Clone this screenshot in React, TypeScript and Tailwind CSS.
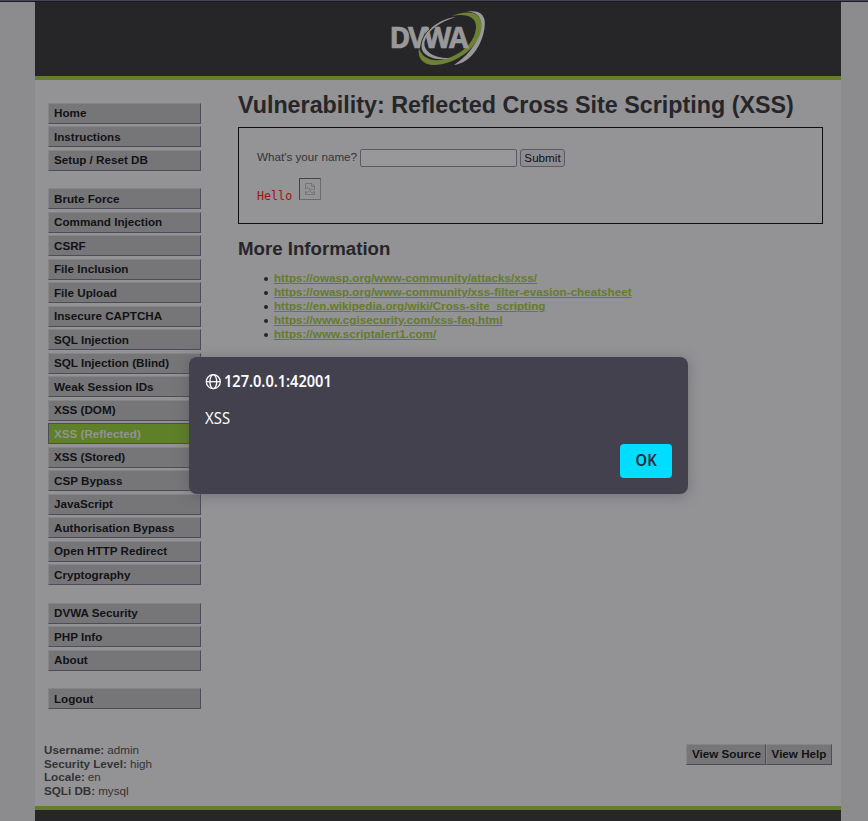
import React from "react";

const groups: string[][] = [
  ["Home", "Instructions", "Setup / Reset DB"],
  [
    "Brute Force",
    "Command Injection",
    "CSRF",
    "File Inclusion",
    "File Upload",
    "Insecure CAPTCHA",
    "SQL Injection",
    "SQL Injection (Blind)",
    "Weak Session IDs",
    "XSS (DOM)",
    "XSS (Reflected)",
    "XSS (Stored)",
    "CSP Bypass",
    "JavaScript",
    "Authorisation Bypass",
    "Open HTTP Redirect",
    "Cryptography",
  ],
  ["DVWA Security", "PHP Info", "About"],
  ["Logout"],
];

const links = [
  "https://owasp.org/www-community/attacks/xss/",
  "https://owasp.org/www-community/xss-filter-evasion-cheatsheet",
  "https://en.wikipedia.org/wiki/Cross-site_scripting",
  "https://www.cgisecurity.com/xss-faq.html",
  "https://www.scriptalert1.com/",
];

const status = [
  ["Username:", "admin"],
  ["Security Level:", "high"],
  ["Locale:", "en"],
  ["SQLi DB:", "mysql"],
];

function Logo() {
  return (
    <svg width="104" height="60" viewBox="0 0 104 60" className="mt-2">
      <path d="M81 3.5C92 2 101 5 98.500 20C96 38 84 55 68 57C80 49 91 37 94 23C97 10 92 4 81 3.500Z" fill="#99999b" />
      <path d="M66 8C80 2 97 3 95.500 19C94 40 68 57 48 57C37 57 31 50 33 40C36 51 49 56 65 49C80 43 89 32 90 20C91 9 80 5 66 8Z" fill="#6c8232" />
      <path d="M70 9C54 14 41 22 38.500 34C37 43 48 51 65 50C50 54 37 48 35.500 40C33 27 51 11 70 9Z" fill="#99999b" />
      <text
        x="0"
        y="0"
        transform="translate(3.6 40) scale(0.99 1)"
        fill="#99999b"
        stroke="#99999b"
        strokeWidth="0.7"
        className="font-['Open_Sans',sans-serif] text-[28.5px] font-bold tracking-[-2.4px]"
      >
        DVWA
      </text>
      <path d="M45 20C38 26 34.500 33 35 41" fill="none" stroke="#262629" strokeWidth="0.9" />
    </svg>
  );
}

function Menu() {
  return (
    <nav className="ml-[13px] mt-[22.9px] flex w-[153px] flex-col gap-[15px]">
      {groups.map((group) => (
        <ul key={group[0]}>
          {group.map((item) => (
            <li
              key={item}
              className={
                item === "XSS (Reflected)"
                  ? "mb-[2.5px] h-[21px] border border-[#4c4c5e] bg-[#5f7f28] pl-[5px] pt-[0.2px] font-bold leading-[18px] text-[#939295]"
                  : "mb-[2.5px] h-[21px] border border-b-[#4c4c5e] border-l-[#858588] border-r-[#4c4c5e] border-t-[#858588] bg-[#767679] pl-[5px] pt-[0.2px] font-bold leading-[18px] text-[#121215]"
              }
            >
              {item}
            </li>
          ))}
        </ul>
      ))}
    </nav>
  );
}

function BrokenImage() {
  return (
    <span className="ml-[7px] flex size-[22px] items-center justify-center border border-b-[#6c6c6f] border-l-[#444447] border-r-[#6c6c6f] border-t-[#444447]">
      <svg width="12" height="14" viewBox="0 0 12 14" fill="none" stroke="#747477" strokeWidth="1">
        <path d="M1.5 7V1.500H8L10.500 4V7.500H8.500M7.500 1.500V4.500H10.500M2.500 6.500L4 5.500L6 8L8 6.500M1.500 12.500V9.500L3.500 10.500L5.500 8.500L8 11L10.500 9.500V12.500Z" />
      </svg>
    </span>
  );
}

function Dialog() {
  return (
    <div className="absolute left-[189px] top-[357px] flex h-[137px] w-[499px] flex-col rounded-[8px] bg-[#42414d] px-4 pb-4 pt-[14px] font-['Noto_Sans',sans-serif] text-[15.5px] text-[#fbfbfe] shadow-[0_2px_14px_rgba(58,57,68,0.35)]">
      <div className="flex h-[22px] items-center font-semibold">
        <svg width="16" height="16" viewBox="0 0 16 16" fill="none" stroke="#fbfbfe" strokeWidth="1.3" className="mr-[3px]">
          <circle cx="8.3" cy="7.7" r="7" />
          <ellipse cx="8.3" cy="7.7" rx="3.4" ry="7" />
          <path d="M1.3 7.7h14" />
        </svg>
        <span className="inline-block origin-left scale-x-[0.94]">127.0.0.1:42001</span>
      </div>
      <p className="mt-[14px] h-[23px] origin-left scale-x-[0.96] leading-[22px]">XSS</p>
      <button className="ml-auto mt-[14px] h-[34px] w-[52px] rounded-[4px] bg-[#00ddff] font-semibold text-[#2b2a33]">
        <span className="inline-block scale-x-[0.95]">OK</span>
      </button>
    </div>
  );
}

const viewButton =
  "flex h-[21px] justify-center whitespace-nowrap border border-b-[#4c4c5e] border-l-[#858588] border-r-[#4c4c5e] border-t-[#858588] bg-[#767679] font-bold leading-[18px] text-[#121215]";

export default function App() {
  return (
    <div className="relative h-[821px] w-[868px] overflow-hidden bg-[#8c8b8e] font-['Liberation_Sans',Arial,sans-serif] text-[11.66px] text-[#333336]">
      <div className="ml-[35px] flex h-[821px] w-[806px] flex-col bg-[#939295]">
        <header className="flex h-[80px] shrink-0 justify-center border-b-4 border-[#657c2b] bg-[#262629]">
          <Logo />
        </header>
        <div className="flex h-[656px] shrink-0">
          <Menu />
          <main className="ml-[37px] w-[585px]">
            <h1 className="mt-[11px] h-[28px] whitespace-nowrap text-[23.3px] font-bold leading-[28px] text-[#262629]">
              Vulnerability: Reflected Cross Site Scripting (XSS)
            </h1>
            <section className="mt-[8px] h-[97px] border border-[#0f0f12] bg-[#949396] pl-[18px] pt-[21px]">
              <div className="flex h-[18px] items-center">
                <label className="w-[103px] whitespace-nowrap pb-[2px]">What's your name?</label>
                <input className="h-[18px] w-[157px] rounded-[2px] border border-[#5b5a69] bg-[#98989b]" />
                <button className="ml-[3px] h-[18px] w-[45px] rounded-[3px] border border-[#5b5a69] bg-[#8d8c91] text-[11.66px] leading-[16px] text-[#101013]">
                  Submit
                </button>
              </div>
              <div className="mt-[11px] flex h-[26px] items-start">
                <span className="pt-[10px] font-['DejaVu_Sans_Mono',monospace] text-[11.7px] leading-[16px] text-[#a80f13]">Hello</span>
                <BrokenImage />
              </div>
            </section>
            <h2 className="mt-[14px] h-[22px] text-[18.66px] font-bold leading-[22px] text-[#262629]">More Information</h2>
            <ul className="mt-[11px] pl-[26px]">
              {links.map((link) => (
                <li key={link} className="flex h-[14px] items-center leading-[14px] text-[#262629]">
                  <span className="mr-[6px] mt-[2px] size-[4px] rounded-full bg-[#262629]" />
                  <a className="font-bold text-[#657c2b] underline">{link}</a>
                </li>
              ))}
            </ul>
          </main>
        </div>
        <div className="flex h-[70px] shrink-0 justify-between pl-[9px] pr-[9px] pt-[7px]">
          <dl>
            {status.map(([name, value]) => (
              <div key={name} className="flex h-[13.7px] gap-[3px] leading-[14px]">
                <dt className="font-bold">{name}</dt>
                <dd>{value}</dd>
              </div>
            ))}
          </dl>
          <div className="mt-px flex">
            <button className={viewButton + " w-[80px] pl-px"}>View Source</button>
            <button className={viewButton + " w-[66px]"}>View Help</button>
          </div>
        </div>
        <footer className="h-[15px] shrink-0 border-t-4 border-[#657c2b] bg-[#262629]" />
      </div>
      <div className="absolute inset-x-0 top-0 h-[2px] border-b border-[#1a1a1f] bg-[#454850]" />
      <Dialog />
    </div>
  );
}
